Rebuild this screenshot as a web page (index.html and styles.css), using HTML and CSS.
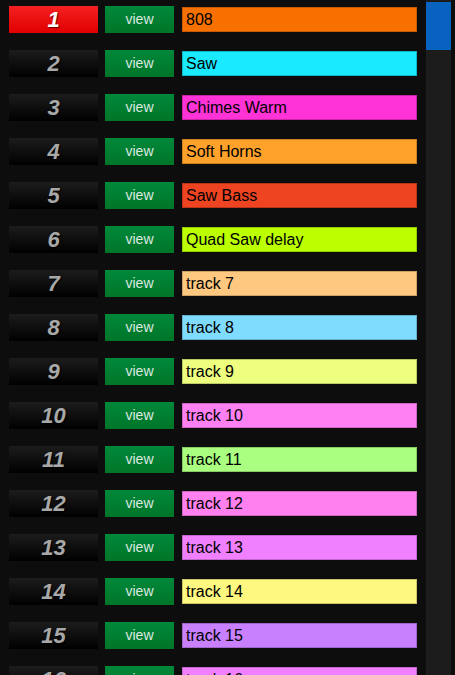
FILE: index.html
```html
<!DOCTYPE html>
<html>
<head>
<meta charset="utf-8">
<link rel="stylesheet" href="styles.css">
</head>
<body>
<div class="page">
  <div class="list">
    <div class="row"><div class="num active">1</div><div class="view">view</div><div class="name" style="background:#f77000;border-color:#c85a00">808</div></div>
    <div class="row"><div class="num">2</div><div class="view">view</div><div class="name" style="background:#19eaff;border-color:#10b8cc">Saw</div></div>
    <div class="row"><div class="num">3</div><div class="view">view</div><div class="name" style="background:#ff33d6;border-color:#cc22aa">Chimes Warm</div></div>
    <div class="row"><div class="num">4</div><div class="view">view</div><div class="name" style="background:#ffa22c;border-color:#cc8020">Soft Horns</div></div>
    <div class="row"><div class="num">5</div><div class="view">view</div><div class="name" style="background:#ee4422;border-color:#bb3318">Saw Bass</div></div>
    <div class="row"><div class="num">6</div><div class="view">view</div><div class="name" style="background:#bbff00;border-color:#94cc00">Quad Saw delay</div></div>
    <div class="row"><div class="num">7</div><div class="view">view</div><div class="name" style="background:#ffc880;border-color:#cca066">track 7</div></div>
    <div class="row"><div class="num">8</div><div class="view">view</div><div class="name" style="background:#80dcff;border-color:#66b0cc">track 8</div></div>
    <div class="row"><div class="num">9</div><div class="view">view</div><div class="name" style="background:#eeff80;border-color:#bbcc66">track 9</div></div>
    <div class="row"><div class="num">10</div><div class="view">view</div><div class="name" style="background:#ff80f2;border-color:#cc66c2">track 10</div></div>
    <div class="row"><div class="num">11</div><div class="view">view</div><div class="name" style="background:#aaff80;border-color:#88cc66">track 11</div></div>
    <div class="row"><div class="num">12</div><div class="view">view</div><div class="name" style="background:#ff80ee;border-color:#cc66be">track 12</div></div>
    <div class="row"><div class="num">13</div><div class="view">view</div><div class="name" style="background:#f080ff;border-color:#c066cc">track 13</div></div>
    <div class="row"><div class="num">14</div><div class="view">view</div><div class="name" style="background:#fff880;border-color:#ccc666">track 14</div></div>
    <div class="row"><div class="num">15</div><div class="view">view</div><div class="name" style="background:#c880ff;border-color:#a066cc">track 15</div></div>
    <div class="row"><div class="num">16</div><div class="view">view</div><div class="name" style="background:#f080ff;border-color:#c066cc">track 16</div></div>
  </div>
  <div class="scrollbar"><div class="thumb"></div></div>
  <div class="edge"></div>
</div>
</body>
</html>
```

FILE: styles.css
```css
html, body {
  margin: 0;
  padding: 0;
  background: #0d0d0d;
  overflow: hidden;
  height: 675px;
}
.page {
  display: flex;
  height: 675px;
  overflow: hidden;
}
.list {
  width: 426px;
  flex: none;
  padding-top: 6px;
  padding-left: 9px;
  box-sizing: border-box;
  display: flex;
  flex-direction: column;
  gap: 17px;
}
.row {
  display: flex;
  align-items: flex-start;
  height: 27px;
  flex: none;
}
.num {
  width: 89px;
  height: 27px;
  background: linear-gradient(#1c1c1c, #000);
  color: #a8a8a8;
  font-family: "Liberation Sans", Arial, sans-serif;
  font-weight: bold;
  font-style: italic;
  font-size: 22px;
  line-height: 27px;
  text-align: center;
  text-shadow: 1px 1px 1px #000;
}
.num.active {
  background: linear-gradient(#f52020, #e00000);
  color: #fff;
  text-shadow: 1px 1px 1px #600;
}
.view {
  margin-left: 7px;
  width: 69px;
  height: 27px;
  background: linear-gradient(#00883a, #007528);
  color: #dde8e0;
  font-family: "Liberation Sans", Arial, sans-serif;
  font-size: 14px;
  line-height: 27px;
  text-align: center;
}
.name {
  margin-left: 8px;
  margin-top: 1px;
  width: 235px;
  height: 25px;
  box-sizing: border-box;
  border: 1px solid #000;
  padding-left: 3px;
  color: #000;
  font-family: "Liberation Sans", Arial, sans-serif;
  font-size: 16px;
  line-height: 23px;
  white-space: nowrap;
  overflow: hidden;
}
.scrollbar {
  width: 25px;
  flex: none;
  background: #1b1c1b;
  padding-top: 2px;
  box-sizing: border-box;
}
.thumb {
  height: 48px;
  background: #0762c0;
}
.edge {
  flex: 1;
  background: #0d0d0d;
}
```
